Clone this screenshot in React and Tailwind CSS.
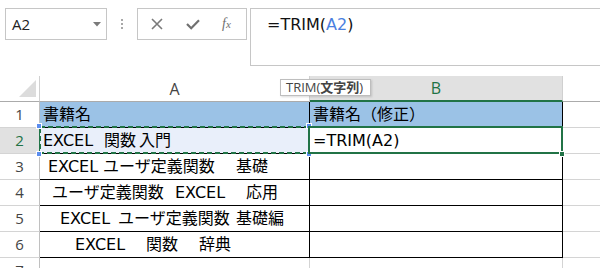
import React from 'react';

const rows = [
  { n: 1, a: [{ t: '書籍名' }], pl: 'pl-[3px]', b: '書籍名（修正）', head: true },
  {
    n: 2,
    a: [{ t: 'EXCEL', w: 'w-[61px]' }, { t: '関数', w: 'w-[35px]' }, { t: '入門' }],
    pl: 'pl-[3px]',
    b: '=TRIM(A2)',
    active: true,
  },
  {
    n: 3,
    a: [{ t: 'EXCEL', w: 'w-[55px]' }, { t: 'ユーザ定義関数', w: 'w-[133px]' }, { t: '基礎' }],
    pl: 'pl-[8px]',
  },
  {
    n: 4,
    a: [{ t: 'ユーザ定義関数', w: 'w-[123px]' }, { t: 'EXCEL', w: 'w-[71px]' }, { t: '応用' }],
    pl: 'pl-[12px]',
  },
  {
    n: 5,
    a: [{ t: 'EXCEL', w: 'w-[58px]' }, { t: 'ユーザ定義関数', w: 'w-[118px]' }, { t: '基礎編' }],
    pl: 'pl-[20px]',
  },
  {
    n: 6,
    a: [{ t: 'EXCEL', w: 'w-[71px]' }, { t: '関数', w: 'w-[53px]' }, { t: '辞典' }],
    pl: 'pl-[35px]',
  },
];

const FormulaBar = () => (
  <div className="flex items-start h-[76px] pt-[8px] pl-[5px]">
    {/* Name box */}
    <div className="relative flex items-center w-[102px] h-[32px] border border-[#c6c6c6] pl-[6px] text-[15px] text-[#222] font-['Open_Sans',sans-serif]">
      A2
      <svg className="absolute left-[87px] top-[13px]" width="8" height="5" viewBox="0 0 8 5">
        <path d="M0 0 L8 0 L4 4.5 Z" fill="#7a7a7a" />
      </svg>
    </div>

    {/* Grip dots */}
    <div className="flex flex-col items-center justify-center gap-[2px] w-[30px] h-[32px]">
      <span className="w-[2px] h-[2px] bg-[#a8a8a8]" />
      <span className="w-[2px] h-[2px] bg-[#a8a8a8]" />
      <span className="w-[2px] h-[2px] bg-[#a8a8a8]" />
    </div>

    {/* Cancel / enter / fx */}
    <div className="flex items-center w-[110px] h-[32px] border border-[#c6c6c6]">
      <svg className="ml-[13px]" width="12" height="12" viewBox="0 0 12 12">
        <path d="M1 1 L11 11 M11 1 L1 11" stroke="#7a7a7a" strokeWidth="1.6" />
      </svg>
      <svg className="ml-[23px]" width="14" height="11" viewBox="0 0 14 11">
        <path d="M1 5 L5.2 9.2 L13 1.2" stroke="#707070" strokeWidth="2.2" fill="none" />
      </svg>
      <span className="ml-[22px] italic text-[14px] text-[#707070] font-['Liberation_Serif',serif] leading-none">
        f<span className="text-[11px]">x</span>
      </span>
    </div>

    {/* Formula input */}
    <div className="ml-[3px] flex-1 h-[58px] border-l border-t border-b border-[#c6c6c6] pl-[16px] pt-[4px] text-[16px] text-[#111] font-['DejaVu_Sans',sans-serif]">
      =TRIM(<span className="text-[#4a7fe0]">A2</span>)
    </div>
  </div>
);

const Header = () => (
  <div className="flex h-[26px] text-[16px] font-['Open_Sans',sans-serif]">
    <div className="relative w-[40px] border-r border-b border-r-[#d0d0d0] border-b-[#ababab]">
      <svg className="absolute left-0 top-0" width="39" height="25" viewBox="0 0 39 25">
        <path d="M36 4 L36 21 L19 21 Z" fill="#dcdcdc" />
      </svg>
    </div>
    <div className="flex items-center justify-center w-[270px] border-r border-b border-r-[#d0d0d0] border-b-[#ababab] text-[#444]">
      A
    </div>
    <div className="flex items-center justify-center w-[253px] border-r border-r-[#d0d0d0] border-b-2 border-b-[#217346] bg-[#e1e1e1] text-[#217346]">
      B
    </div>
    <div className="flex-1 border-b border-[#ababab]" />
  </div>
);

const Row = ({ row }) => (
  <div className="flex h-[26px]">
    <div
      className={
        row.active
          ? 'flex items-center justify-center w-[40px] border-r border-b border-r-[#217346] border-b-[#d4d4d4] bg-[#e1e1e1] text-[#217346] text-[15px] font-[\'Open_Sans\',sans-serif]'
          : 'flex items-center justify-center w-[40px] border-r border-b border-r-[#c0c0c0] border-b-[#d4d4d4] text-[#444] text-[15px] font-[\'Open_Sans\',sans-serif]'
      }
    >
      {row.n}
    </div>
    <div
      className={`flex items-center w-[270px] border-r border-b border-black ${row.pl} ${
        row.head ? 'bg-[#9bc2e6]' : row.active ? 'bg-[#e9effa]' : 'bg-white'
      }`}
    >
      {row.a.map((s, i) => (
        <span key={i} className={`inline-block shrink-0 whitespace-nowrap ${s.w || ''}`}>
          {s.t}
        </span>
      ))}
    </div>
    <div
      className={`flex items-center w-[253px] border-r border-b border-black pl-[3px] ${
        row.head ? 'bg-[#9bc2e6]' : 'bg-white'
      }`}
    >
      {row.b}
    </div>
    <div className="flex-1 border-b border-[#d4d4d4]" />
  </div>
);

const Handle = ({ className }) => (
  <div className={`absolute w-[6px] h-[6px] bg-[#5b8def] border border-white ${className}`} />
);

export default function App() {
  return (
    <div className="w-[600px] h-[268px] overflow-hidden bg-white">
      <FormulaBar />

      <div className="relative text-[16px] text-black leading-none font-['DejaVu_Sans','Noto_Sans_CJK_JP',sans-serif]">
        <Header />
        {rows.map((row) => (
          <Row key={row.n} row={row} />
        ))}
        <div className="flex h-[26px]">
          <div className="flex items-start justify-center pt-[5px] w-[40px] border-r border-[#c0c0c0] text-[#444] text-[15px] font-['Open_Sans',sans-serif]">
            7
          </div>
          <div className="w-[270px] border-r border-[#d4d4d4]" />
          <div className="w-[253px] border-r border-[#d4d4d4]" />
        </div>

        {/* Copy-reference marquee around A2 */}
        <svg className="absolute left-[39px] top-[50px]" width="271" height="28" viewBox="0 0 271 28">
          <rect x="1" y="1" width="269" height="26" fill="none" stroke="#217346" strokeWidth="2" strokeDasharray="5 3" />
        </svg>
        <Handle className="left-[36px] top-[47px]" />
        <Handle className="left-[306px] top-[47px]" />
        <Handle className="left-[36px] top-[75px]" />
        <Handle className="left-[306px] top-[75px]" />

        {/* Active cell B2 */}
        <div className="absolute left-[308px] top-[50px] w-[255px] h-[28px] border-2 border-[#217346]" />
        <div className="absolute left-[559px] top-[75px] w-[6px] h-[6px] bg-[#217346] border border-white" />

        {/* Function tooltip */}
        <div className="absolute left-[280px] top-[3px] h-[17px] w-[91px] flex items-center pl-[5px] bg-white border border-[#bebebe] shadow-[1px_1px_2px_rgba(0,0,0,0.15)] text-[13px] text-[#444] font-['Open_Sans','Noto_Sans_CJK_JP',sans-serif]">
          TRIM(<span className="font-bold">文字列</span>)
        </div>
      </div>
    </div>
  );
}
